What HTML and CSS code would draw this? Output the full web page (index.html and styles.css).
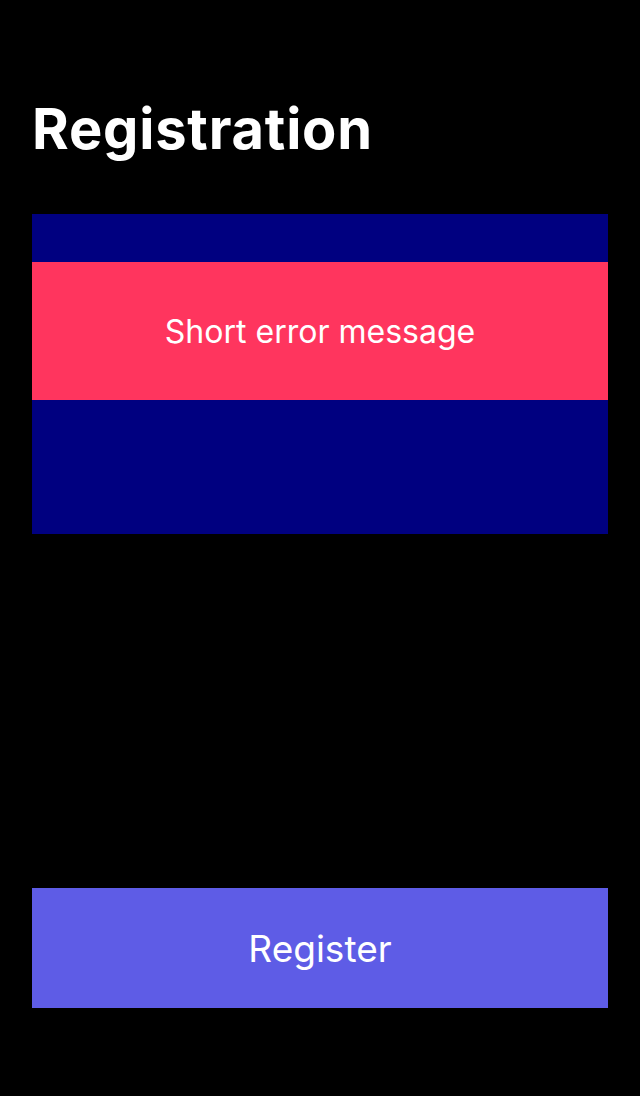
FILE: index.html
```html
<!DOCTYPE html>
<html lang="en">
<head>
<meta charset="utf-8">
<title>Registration</title>
<link rel="stylesheet" href="styles.css">
</head>
<body>
<main class="screen">
  <h1 class="title">Registration</h1>
  <section class="form-area">
    <div class="error-banner">Short error message</div>
  </section>
  <button class="register-btn" type="button">Register</button>
</main>
</body>
</html>
```

FILE: styles.css
```css
html, body {
  margin: 0;
  padding: 0;
  background: #000;
}

body {
  font-family: Inter, "Noto Sans", "Liberation Sans", sans-serif;
  color: #fff;
}

.screen {
  box-sizing: border-box;
  min-height: 1096px;
  display: flex;
  flex-direction: column;
  padding: 95px 32px 88px;
}

.title {
  margin: 0 0 51px;
  font-size: 56px;
  line-height: 68px;
  font-weight: 700;
  letter-spacing: 0.8px;
}

.form-area {
  background: #000080;
  height: 320px;
  padding-top: 48px;
  box-sizing: border-box;
}

.error-banner {
  height: 138px;
  background: #ff355e;
  display: flex;
  align-items: center;
  justify-content: center;
  font-size: 32px;
  font-weight: 400;
}

.register-btn {
  margin-top: auto;
  height: 120px;
  border: none;
  background: #5e5ce6;
  color: #fff;
  font-family: inherit;
  font-size: 37px;
  font-weight: 400;
  padding: 0;
  border-radius: 0;
}
```
